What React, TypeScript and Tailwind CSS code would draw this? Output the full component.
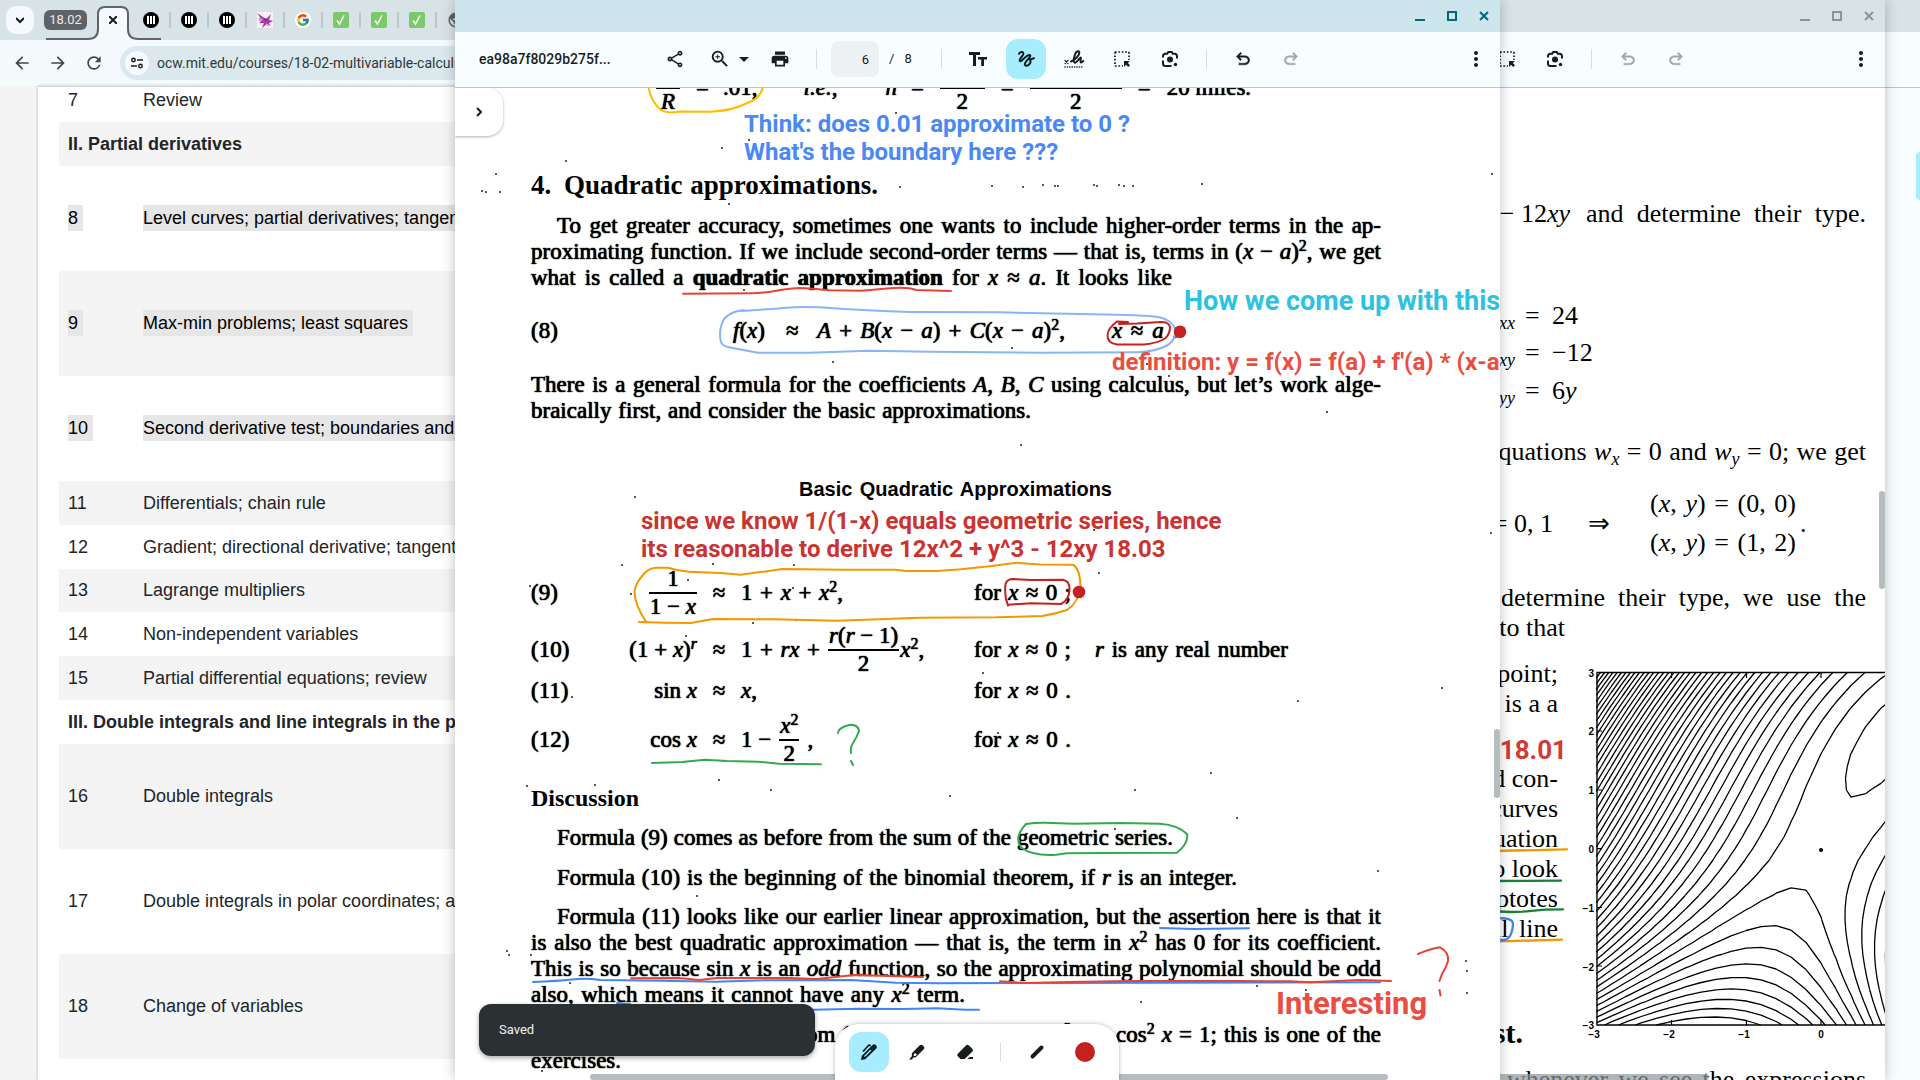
import React from "react";
import type { ReactNode } from "react";
import { FcGoogle } from "react-icons/fc";
import {
  MdArrowBack,
  MdArrowForward,
  MdRefresh,
  MdOutlineShare,
  MdZoomIn,
  MdArrowDropDown,
  MdPrint,
  MdMoreVert,
  MdPublic,
} from "react-icons/md";

/* ---------- icons ---------- */

const UNDO =
  "M7 19v-2h7.1q1.575 0 2.738-1T18 13.5 16.838 11 14.1 10H7.8l2.6 2.6L9 14 4 9l5-5 1.4 1.4L7.8 8h6.3q2.425 0 4.163 1.575T20 13.5t-1.737 3.925T14.1 19z";

function UndoIcon({ flip = false }: { flip?: boolean }) {
  return (
    <svg viewBox="0 0 24 24" className={flip ? "size-5 -scale-x-100" : "size-5"} fill="currentColor">
      <path d={UNDO} stroke="currentColor" strokeWidth="0.5" />
    </svg>
  );
}

function TextSizeIcon() {
  return (
    <svg viewBox="0 0 20 20" className="size-5" fill="currentColor">
      <path d="M1 3h11v3H8v11H5V6H1zM10 8h9v2.600h-3V17h-2.800v-6.400H10z" />
    </svg>
  );
}

function DrawIcon() {
  return (
    <svg viewBox="0 0 20 20" className="size-5" fill="none" stroke="currentColor" strokeWidth="2" strokeLinecap="round">
      <path d="M3 4.800C4.500 2.500 7.800 2.400 7.300 5 6.700 7.600 2.800 10 3.800 12c1.200 2 6-6.300 9.700-6 3.300.5-3.500 5.500-4.600 8.500-.7 2.500 2.300 3.200 4.600.5 1.800-2.100 1.300-5-1.100-4.800M13.500 10c2 .4 3 .2 4.500-.8" />
    </svg>
  );
}

function SignIcon() {
  return (
    <svg viewBox="0 0 22 20" className="h-5 w-[22px]" fill="none" stroke="currentColor" strokeLinecap="round">
      <path d="M2 11.500l3 3M5 11.500l-3 3" strokeWidth="1.200" />
      <path
        d="M8 12.500c4-1.500 8.500-6 8.300-9C16 1.300 13.500 2 12.300 4.800 11 8 9.800 12.500 11.600 13.600c2 1 4.300-4.200 6-5 .9-.3-.9 4.600.3 4.900.7.2 1.500-.7 2.300-1.500"
        strokeWidth="2"
      />
      <path d="M2 18h18" strokeWidth="1.600" strokeDasharray="0.1 2.3" />
    </svg>
  );
}

function SelectAreaIcon() {
  return (
    <svg viewBox="0 0 20 20" className="size-5" fill="currentColor">
      <path
        d="M3 3h14M3 3v14M17 3v8M3 17h8"
        fill="none"
        stroke="currentColor"
        strokeWidth="1.700"
        strokeDasharray="1.700 1.700"
      />
      <path d="M12 12h6l-2.200 2L18 16.300 16.300 18 14 15.800 12 18z" />
    </svg>
  );
}

function LensIcon() {
  return (
    <svg viewBox="0 0 20 20" className="size-5" fill="none" stroke="currentColor" strokeWidth="2">
      <path d="M3 8.500V7a2.200 2.200 0 0 1 2.200-2.200h2L8.300 3h3.400l1.100 1.800h2A2.200 2.200 0 0 1 17 7v2.500M3 11.500v3A2.500 2.500 0 0 0 5.500 17h6" />
      <circle cx="10" cy="10.500" r="3" fill="currentColor" stroke="none" />
      <circle cx="15.500" cy="15.500" r="1.700" fill="currentColor" stroke="none" />
    </svg>
  );
}

function PenIcon() {
  return (
    <svg viewBox="0 0 20 20" className="size-5" fill="currentColor">
      <path d="M2 18l.800-4.200L13.500 3.100c1-1 2.300-1 3.200-.1l.5.5c.9.9.9 2.200-.1 3.200L6.200 17.300z" />
      <path d="M4 9.500l5-5.500c.8-.9 1.800-.9 2.600-.2" fill="none" stroke="currentColor" strokeWidth="1.700" />
      <path d="M5.500 14.500L12 8" stroke="#a8edff" strokeWidth="1.200" />
    </svg>
  );
}

function MarkerIcon() {
  return (
    <svg viewBox="0 0 20 20" className="size-5" fill="currentColor">
      <path
        fillRule="evenodd"
        d="M2 17.500l3-3.500-.3-1.700c0-.7.200-1.200.6-1.600l7.200-7.200c1.100-1.100 2.300-1.100 3.300-.100l.8.800c1 1 1 2.300-.1 3.300L9.300 14.800c-.5.4-1 .6-1.600.6l-1.200-.1L5 17.500zM6.800 12.200l-.2 1.200.7.7 1.300-.2 1.200-1.300-1.700-1.700z"
      />
    </svg>
  );
}

function EraserIcon() {
  return (
    <svg viewBox="0 0 20 20" className="size-5" fill="currentColor">
      <path d="M8 17H5.500l-2.700-2.700c-.8-.8-.8-1.800 0-2.600l8.400-8.400c.8-.8 1.800-.8 2.600 0l3.600 3.600c.8.800.8 1.800 0 2.600L9.700 17zM12.500 17l2-2H18v2z" />
    </svg>
  );
}

/* ---------- small pieces ---------- */

function IconButton({ label, className = "", children }: { label: string; className?: string; children: ReactNode }) {
  return (
    <button
      type="button"
      aria-label={label}
      className={`flex h-10 w-10 shrink-0 items-center justify-center rounded-xl ${className}`}
    >
      {children}
    </button>
  );
}

function WindowControls({ active }: { active: boolean }) {
  return (
    <div className={`flex items-center gap-3 ${active ? "text-[#006978]" : "text-[#8a9496]"}`}>
      <button type="button" aria-label="Minimize" className="flex h-5 w-5 items-center justify-center">
        <svg viewBox="0 0 10 10" className="size-[10px]">
          <path d="M0 9h10" stroke="currentColor" strokeWidth="2" />
        </svg>
      </button>
      <button type="button" aria-label="Maximize" className="flex h-5 w-5 items-center justify-center">
        <svg viewBox="0 0 10 10" className="size-[10px]">
          <rect x="1" y="1" width="8" height="8" fill="none" stroke="currentColor" strokeWidth="2" />
        </svg>
      </button>
      <button type="button" aria-label="Close" className="flex h-5 w-5 items-center justify-center">
        <svg viewBox="0 0 10 10" className="size-[10px]">
          <path d="M1 1l8 8M9 1L1 9" stroke="currentColor" strokeWidth="2" />
        </svg>
      </button>
    </div>
  );
}

function Divider({ className = "" }: { className?: string }) {
  return <span className={`h-5 w-px shrink-0 bg-[#d5dde0] ${className}`} />;
}

function ViewerWindow({
  active,
  title,
  className,
  children,
}: {
  active: boolean;
  title: string;
  className: string;
  children: ReactNode;
}) {
  return (
    <section
      className={`absolute inset-y-0 flex w-[1045px] flex-col overflow-hidden bg-white shadow-[0_0_12px_rgba(0,0,0,0.25)] ${className}`}
    >
      <div
        className={`flex h-8 shrink-0 items-center justify-end pr-[6px] ${active ? "bg-[#cde6ed]" : "bg-[#d7e3e7]"}`}
      >
        <WindowControls active={active} />
      </div>
      <header className="flex h-14 shrink-0 items-center border-b border-[#bcc6c9] bg-[#f8fdff] pr-1 pb-px pl-6 text-[#171d1e]">
        <h1 className="w-[176px] truncate font-['Roboto',sans-serif] text-[14px] font-medium">{title}</h1>
        <IconButton label="Share">
          <MdOutlineShare className="size-5" />
        </IconButton>
        <IconButton label="Zoom" className="ml-[5px]">
          <MdZoomIn className="size-[22px]" />
        </IconButton>
        <button type="button" aria-label="Zoom levels" className="-ml-2 flex h-10 w-6 items-center justify-center">
          <MdArrowDropDown className="size-6 shrink-0" />
        </button>
        <IconButton label="Print" className="ml-1">
          <MdPrint className="size-5" />
        </IconButton>
        <Divider className="ml-4" />
        <input
          aria-label="Page number"
          defaultValue="6"
          className="ml-[14px] h-9 w-12 rounded-lg bg-[#edf1f3] pr-[10px] text-right font-['Roboto',sans-serif] text-[13px]"
        />
        <span className="ml-[10px] flex w-[38px] gap-[10px] font-['Roboto',sans-serif] text-[13px]">
          <span>/</span>
          <span>8</span>
        </span>
        <Divider className="ml-[14px]" />
        <IconButton label="Add text" className="ml-4">
          <TextSizeIcon />
        </IconButton>
        <IconButton label="Draw" className={`ml-2 ${active ? "bg-[#a8edff] text-[#001f25]" : ""}`}>
          <DrawIcon />
        </IconButton>
        <IconButton label="Sign" className="ml-2">
          <SignIcon />
        </IconButton>
        <IconButton label="Select area" className="ml-2">
          <SelectAreaIcon />
        </IconButton>
        <IconButton label="Search with lens" className="ml-2">
          <LensIcon />
        </IconButton>
        <Divider className="ml-4" />
        <IconButton label="Undo" className={active ? "ml-4" : "ml-4 text-[#a2a7a8]"}>
          <UndoIcon />
        </IconButton>
        <IconButton label="Redo" className="ml-2 text-[#a2a7a8]">
          <UndoIcon flip />
        </IconButton>
        <IconButton label="More" className="ml-auto">
          <MdMoreVert className="size-6" />
        </IconButton>
      </header>
      <div className="relative flex-1 overflow-hidden bg-white">{children}</div>
    </section>
  );
}

function Line({ className = "", children }: { className?: string; children: ReactNode }) {
  return <div className={`text-justify whitespace-nowrap [text-align-last:justify] ${className}`}>{children}</div>;
}

function Sup({ children }: { children: ReactNode }) {
  return <sup className="text-[16px] leading-none">{children}</sup>;
}

function Frac({ top, bottom }: { top: ReactNode; bottom: ReactNode }) {
  return (
    <span className="inline-flex flex-col items-center align-middle">
      <span className="px-px">{top}</span>
      <span className="h-[2px] w-full bg-black" />
      <span className="px-px">{bottom}</span>
    </span>
  );
}

/* ---------- browser window with course calendar ---------- */

function MediumFavicon() {
  return (
    <svg viewBox="0 0 16 16" className="size-4">
      <circle cx="8" cy="8" r="8" fill="#000" />
      <rect x="4" y="4" width="2" height="8" fill="#fff" />
      <rect x="7" y="4" width="2" height="8" fill="#fff" />
      <rect x="10" y="4" width="2" height="8" fill="#fff" />
    </svg>
  );
}

function BirdFavicon() {
  return (
    <svg viewBox="0 0 16 16" className="size-4">
      <rect width="16" height="16" fill="#fbeff9" />
      <path d="M0 1l6 4 3 2 5-5-2 6 4 1-4 2 2 3-4-2-5 4 2-5-5 0 3-3z" fill="#a53ba4" />
      <path d="M2 5l5 3-5 1zM9 10l3 5-2-1z" fill="#e17fc8" />
      <path d="M7 6l3 1-2 2z" fill="#5f2a7d" />
    </svg>
  );
}

function CheckFavicon() {
  return (
    <svg viewBox="0 0 16 16" className="size-4">
      <rect width="16" height="16" rx="2" fill="#7cc96c" />
      <path d="M4 8.500l2.500 3.500L11 3.500" fill="none" stroke="#fff" strokeWidth="1.500" />
    </svg>
  );
}

function GoogleFavicon() {
  return (
    <span className="flex size-4 items-center justify-center rounded-full bg-white">
      <FcGoogle className="size-[14px]" />
    </span>
  );
}

const TABS: { name: string; icon: ReactNode }[] = [
  { name: "Article 1", icon: <MediumFavicon /> },
  { name: "Article 2", icon: <MediumFavicon /> },
  { name: "Article 3", icon: <MediumFavicon /> },
  { name: "Bird", icon: <BirdFavicon /> },
  { name: "Search", icon: <GoogleFavicon /> },
  { name: "Task 1", icon: <CheckFavicon /> },
  { name: "Task 2", icon: <CheckFavicon /> },
  { name: "Task 3", icon: <CheckFavicon /> },
  { name: "Site", icon: <MdPublic className="size-[18px] text-[#5f6368]" /> },
];

type Row = { n?: string; text: string; size?: "tall" | "short"; marked?: boolean; head?: boolean; shade?: boolean };

const ROWS: Row[] = [
  { n: "7", text: "Review" },
  { text: "II. Partial derivatives", head: true, shade: true },
  { n: "8", text: "Level curves; partial derivatives; tangent plane approximation", size: "tall", marked: true },
  { n: "9", text: "Max-min problems; least squares", size: "tall", marked: true, shade: true },
  { n: "10", text: "Second derivative test; boundaries and infinity", size: "tall", marked: true },
  { n: "11", text: "Differentials; chain rule", shade: true },
  { n: "12", text: "Gradient; directional derivative; tangent plane" },
  { n: "13", text: "Lagrange multipliers", size: "short", shade: true },
  { n: "14", text: "Non-independent variables" },
  { n: "15", text: "Partial differential equations; review", shade: true },
  { text: "III. Double integrals and line integrals in the plane", head: true },
  { n: "16", text: "Double integrals", size: "tall", shade: true },
  { n: "17", text: "Double integrals in polar coordinates; applications", size: "tall" },
  { n: "18", text: "Change of variables", size: "tall", shade: true },
];

const ROW_HEIGHT = { tall: "h-[105px]", short: "h-[43px]", normal: "h-11" };

function Browser() {
  return (
    <section className="absolute inset-0 flex flex-col overflow-hidden bg-[#f4f4f4]">
      <div className="relative flex h-10 shrink-0 items-center bg-[#d7e3e7] pl-[6px] font-['Roboto',sans-serif]">
        <button type="button" aria-label="Search tabs" className="flex h-7 w-7 items-center justify-center rounded-[10px] bg-[#f5fbfd]">
          <svg viewBox="0 0 8 8" className="size-2" fill="none" stroke="#171d1e" strokeWidth="2">
            <path d="M0 2l4 4 4-4" />
          </svg>
        </button>
        <button type="button" className="ml-[10px] h-5 w-[43px] rounded-md bg-[#5f6368] text-[13px] leading-5 text-[#e8eaed]">
          18.02
        </button>
        <svg viewBox="46 6 116 34" className="absolute bottom-0 left-[46px] h-[34px] w-[116px]">
          <path
            d="M46 39h42q9 0 9-9V14q0-7 7-7h18q7 0 7 7v16q0 9 9 9h23v2H46z"
            fill="#f5fbfd"
          />
          <path
            d="M46 39h42q10 0 10-10V14q0-7 7-7h16q7 0 7 7v15q0 10 10 10h23"
            fill="none"
            stroke="#5f6368"
            strokeWidth="2"
          />
        </svg>
        <button type="button" aria-label="Close tab" className="relative ml-[17px] flex h-6 w-[18px] items-center justify-center">
          <svg viewBox="0 0 8 8" className="size-2" stroke="#171d1e" strokeWidth="2">
            <path d="M0 0l8 8M8 0L0 8" />
          </svg>
        </button>
        <div className="ml-[11px] flex items-center">
          {TABS.map((t) => (
            <button
              type="button"
              key={t.name}
              aria-label={t.name}
              className="flex h-4 w-[38px] items-center border-r-2 border-[#bfc6c8] pl-[10px]"
            >
              {t.icon}
            </button>
          ))}
        </div>
      </div>
      <div className="flex h-[46px] shrink-0 items-center bg-[#f5fbfd] pl-[12px] text-[#3b484b]">
        <button type="button" aria-label="Back">
          <MdArrowBack className="size-5" />
        </button>
        <button type="button" aria-label="Forward" className="ml-4">
          <MdArrowForward className="size-5" />
        </button>
        <button type="button" aria-label="Reload" className="ml-4">
          <MdRefresh className="size-5" />
        </button>
        <div className="ml-4 flex h-[34px] flex-1 items-center rounded-full bg-[#dbe9ee] pl-[5px]">
          <span className="flex size-6 items-center justify-center rounded-full bg-[#f5fbfd]">
            <svg viewBox="0 0 12 12" className="size-3" fill="none" stroke="#171d1e" strokeWidth="1.500">
              <circle cx="2.500" cy="3" r="1.700" />
              <path d="M6 3h6M0 9h6" />
              <circle cx="9.500" cy="9" r="1.700" />
            </svg>
          </span>
          <input
            aria-label="Address"
            defaultValue="ocw.mit.edu/courses/18-02-multivariable-calculus-fall-2007"
            className="ml-2 w-[600px] bg-transparent font-['Roboto',sans-serif] text-[14px] text-[#30383a]"
          />
        </div>
      </div>
      <main className="ml-[38px] flex-1 overflow-hidden border-t border-[#c9dde3] bg-white pl-[21px] shadow-[0_0_3px_rgba(0,0,0,0.25)]">
        <table className="-mt-[9px] w-full border-collapse font-['Liberation_Sans',sans-serif] text-[18px] text-[#212529]">
          <tbody>
            {ROWS.map((r) => (
              <tr key={r.text} className={`${ROW_HEIGHT[r.size ?? "normal"]} ${r.shade ? "bg-[#f4f4f4]" : ""}`}>
                {r.head ? (
                  <th colSpan={2} scope="colgroup" className="p-0 pl-[9px] text-left font-bold">
                    {r.text}
                  </th>
                ) : (
                  <>
                    <td className="w-[84px] p-0 pl-[9px]">
                      <span className={r.marked ? "bg-[#e6e6e6] py-[3px] pr-[5px] text-black" : ""}>{r.n}</span>
                    </td>
                    <td className="p-0 whitespace-nowrap">
                      <span className={r.marked ? "bg-[#e6e6e6] py-[3px] pr-[5px] text-black" : ""}>{r.text}</span>
                    </td>
                  </>
                )}
              </tr>
            ))}
          </tbody>
        </table>
      </main>
    </section>
  );
}

/* ---------- right document ---------- */

const sx = (x: number) => 1821 + x * 74.9;
const sy = (y: number) => 848.7 - y * 58.75;

function contourPath(): string {
  const f = (x: number, y: number) => 12 * x * x + y * y * y - 12 * x * y;
  const step = 0.2;
  const out: string[] = [];
  for (let k = 1; k <= 50; k++) {
    const level = -54 + (297 / 51) * k;
    for (let i = 0; i < 20; i++) {
      for (let j = 0; j < 30; j++) {
        const x0 = -3 + i * step;
        const y0 = -3 + j * step;
        const c = [
          [x0, y0],
          [x0 + step, y0],
          [x0 + step, y0 + step],
          [x0, y0 + step],
        ];
        const v = c.map(([x, y]) => f(x, y) - level);
        const pts: string[] = [];
        for (let e = 0; e < 4; e++) {
          const a = v[e];
          const b = v[(e + 1) % 4];
          if (a < 0 !== b < 0) {
            const t = a / (a - b);
            const p = c[e];
            const q = c[(e + 1) % 4];
            pts.push(`${sx(p[0] + t * (q[0] - p[0])).toFixed(1)} ${sy(p[1] + t * (q[1] - p[1])).toFixed(1)}`);
          }
        }
        for (let m = 0; m + 1 < pts.length; m += 2) out.push(`M${pts[m]}L${pts[m + 1]}`);
      }
    }
  }
  return out.join("");
}

const CONTOURS = contourPath();

function ContourPlot() {
  return (
    <svg viewBox="1576 656 309 386" className="-mt-[3px] h-[386px] w-[309px] shrink-0">
      <path d={CONTOURS} fill="none" stroke="#000" strokeWidth="1.300" />
      <path d="M1900 672.500H1597V1025H1900" fill="none" stroke="#000" strokeWidth="1.400" />
      <path
        d="M1597 731h5M1597 790h5M1597 848.700h5M1597 907.500h5M1597 966h5M1671.500 1025v-5M1746.500 1025v-5M1821 1025v-5M1671.500 673v5M1746.500 673v5M1821 673v5"
        stroke="#000"
        strokeWidth="1.200"
      />
      <circle cx="1821" cy="850" r="2" />
      <g fontFamily="'Liberation Sans', sans-serif" fontSize="10" fontWeight="700" fill="#000">
        <g textAnchor="end">
          <text x="1594" y="677">3</text>
          <text x="1594" y="735">2</text>
          <text x="1594" y="794">1</text>
          <text x="1594" y="853">0</text>
          <text x="1594" y="912">−1</text>
          <text x="1594" y="971">−2</text>
          <text x="1594" y="1029">−3</text>
        </g>
        <g textAnchor="middle">
          <text x="1594" y="1038">−3</text>
          <text x="1669" y="1038">−2</text>
          <text x="1744" y="1038">−1</text>
          <text x="1821" y="1038">0</text>
        </g>
      </g>
    </svg>
  );
}

function RightDocument() {
  return (
    <>
      <article className="flex h-full flex-col items-end pr-[19px] font-['Liberation_Serif',serif] text-[26px] leading-[30px] whitespace-nowrap text-black">
        <div className="mt-[111px] flex items-baseline gap-4">
          <span>
            − 12<i>xy</i>
          </span>
          <Line className="w-[280px]">and determine their type.</Line>
        </div>
        {[
          ["xx", <>24</>, "mt-[72px]"],
          ["xy", <>−12</>, "mt-[7px]"],
          ["yy", <>6<i>y</i></>, "mt-2"],
        ].map(([s, v, m]) => (
          <div key={s as string} className={`flex w-[386px] items-baseline ${m}`}>
            <span className="w-[35px] text-right">
              <i>w</i>
              <sub className="text-[18px] leading-none italic">{s}</sub>
            </span>
            <span className="ml-[10px] w-[27px]">=</span>
            <span>{v}</span>
          </div>
        ))}
        <Line className="mt-[31px] w-[379px]">
          equations <i>w</i>
          <sub className="text-[18px] leading-none italic">x</sub> = 0 and <i>w</i>
          <sub className="text-[18px] leading-none italic">y</sub> = 0; we get
        </Line>
        <div className="mt-[22px] flex w-[386px] items-center">
          <span className="w-[73px] text-right">= 0, 1</span>
          <span className="ml-[35px] w-[62px]">⇒</span>
          <div className="flex w-[146px] flex-col gap-[9px]">
            <Line>
              (<i>x</i>, <i>y</i>) = (0, 0)
            </Line>
            <Line>
              (<i>x</i>, <i>y</i>) = (1, 2)
            </Line>
          </div>
          <span className="ml-1">.</span>
        </div>
        <Line className="mt-[25px] w-[365px]">determine their type, we use the</Line>
        <div className="w-[386px]">
          <div className="w-[85px] text-right">to that</div>
        </div>
        <div className="mt-4 -mr-[19px] flex items-start">
          <div className="flex w-[96px] flex-col items-end pr-[18px]">
            <div>point;</div>
            <div>is a a</div>
            <div className="-mr-[9px] h-[45px] pt-4 font-['Roboto',sans-serif] font-bold text-[#d03a37]">18.01</div>
            <div>and con-</div>
            <div>curves</div>
            <div>equation</div>
            <div>to look</div>
            <div>asymptotes</div>
            <div>
              all <span className="ml-1">line</span>
            </div>
            <div className="mt-[74px] mr-[35px] text-[30px] font-bold">test.</div>
          </div>
          <ContourPlot />
        </div>
        <Line className="mt-[17px] w-[359px]">whenever we see the expressions</Line>
      </article>
      <svg viewBox="840 88 1045 992" className="pointer-events-none absolute top-0 left-0 h-[992px] w-[1045px]" fill="none" strokeWidth="2.300" strokeLinecap="round">
        <path d="M1490 851L1515 850.500 1567 849.300M1490 941.700L1562 939.700" stroke="#f29900" />
        <path d="M1490 881L1561 880.700M1490 911L1510 912 1523 911.700 1545 909.600 1563 909.300" stroke="#188038" />
        <path d="M1495 918.500Q1513 917 1513 924 1512 939 1504 940L1495 940" stroke="#4285f4" />
      </svg>
      <div className="absolute top-[403px] right-0 h-[98px] w-[6px] rounded-full bg-[#b5bdbf]" />
      <div className="absolute bottom-0 left-[300px] h-[6px] w-[569px] rounded-full bg-[#8f999c]/70" />
    </>
  );
}

/* ---------- center document ---------- */

const INK: { color: string; d: string }[] = [
  { color: "#fbbc04", d: "M648 84Q650 101 661 110 668 114 679 111.500L710 111.700Q731 111 745 104 763 98 763 84" },
  { color: "#ea4335", d: "M683 293.700L751 293.300Q765 293 775 291T799 288Q805 288 813 288.700T830 290.300L861 290.700Q880 289 894 288T916 290L951 291" },
  {
    color: "#8ab4f8",
    d: "M744 310Q731 311 724 319 718 330 721 342 722 346 730 347.500L758 352.700 810 352.700 868 350.700 930 351.700 1040 352.700 1137 352.300Q1155 352 1168 345 1178 337 1175 328 1170 319 1158 317 1144 315 1093 314.300L1000 312.300 910 312Q870 311 820 307.300 795 306 775 308.700L741 311",
  },
  {
    color: "#c5221f",
    d: "M1119 324L1128 322 1117 321.500Q1108 328 1107.500 335 1107 343 1117 344.500L1144 344.500Q1158 343 1165 338.500 1170 334 1170 327 1169 322 1161 322L1137 323.500 1119 324",
  },
  {
    color: "#f29900",
    d: "M646 621.700Q635 605 634.500 592 635 583 645 572.700 650 568 656 567.700L668 567.700Q678 571 689 571.700L720 573 741 574.700Q762 572 782 569L844 569.700 896 569.700 906 571 937 571 961 569.300 992 566 1016 562.700 1040 564.500 1073 564.700Q1080 569 1080.500 586 1079 602 1067 610 1055 614 1042 616L996 617.300 920 617.700 837 620.700 775 619.300 713 619 691 623 665 622.700 639 622",
  },
  {
    color: "#c5221f",
    d: "M1008 605.700Q1004 596 1005.500 584 1007 579 1013 579L1031 580 1063 579.700Q1070 581 1069.500 590 1069 600 1061 604L1031 603.300 1008 604.700",
  },
  { color: "#34a853", d: "M652 763L682 762 705 759.700 727 761 758 761.700 779 763.700 821 764.300" },
  { color: "#34a853", d: "M838 733Q838 728 849 725 858 724 859 731 857 737 853 743 850 747 851 753M851 761L853 765" },
  {
    color: "#34a853",
    d: "M1026 824Q1035 822.500 1045 822.700L1074 823.700 1120 823 1160 823.700Q1178 825 1187 834 1189 843 1177 852.700L1103 853 1067 853.300 1056 854.700Q1032 856 1022 848 1013 838 1026 824z",
  },
  { color: "#4285f4", d: "M1160 928L1195 929 1249 928.300" },
  {
    color: "#4285f4",
    d: "M533 982Q558 981 572 979.500T600 980L661 980.700 716 981.700 765 980.300 851 980 896 982.700 937 983.300 1050 983 1380 982.300M617 1003L630 1004M790 1010L813 1009.700 858 1008.700 903 1009 937 1008.300 965 1009.700 979 1009.700",
  },
  {
    color: "#ea4335",
    d: "M631 978.300L679 978 699 980 717 978 789 978 817 979 854 975 890 976 923 977M1000 981.300L1025 983 1069 982 1128 981 1238 981 1290 981.300 1310 982.300 1359 980 1391 981",
  },
  { color: "#ea4335", d: "M1418 954Q1430 949 1440 947.300 1449 952 1448 961 1446 968 1442 974L1439.500 981M1439.500 990L1440.500 995.500" },
];

const SPECKS: [number, number][] = [
  [496, 174], [482, 191], [486, 192], [500, 192], [566, 161], [722, 148], [749, 140], [729, 204], [896, 113], [900, 187],
  [992, 186], [1023, 187], [1043, 185], [1055, 186], [1058, 186], [1094, 185], [1097, 186], [1119, 185], [1124, 186],
  [1133, 186], [1202, 184], [1492, 174], [744, 290], [833, 362], [1012, 348], [1147, 364], [1169, 376], [1021, 445],
  [1327, 412], [635, 497], [622, 565], [713, 564], [794, 565], [688, 580], [631, 594], [793, 588], [1099, 573],
  [753, 623], [796, 620], [686, 636], [530, 586], [983, 673], [572, 697], [1298, 701], [1442, 688], [998, 733],
  [1211, 773], [1135, 790], [1237, 818], [527, 786], [595, 785], [719, 780], [771, 790], [950, 796], [507, 951],
  [509, 955], [531, 955], [697, 896], [570, 983], [1378, 871], [1466, 961], [1467, 971], [1467, 993], [1257, 986],
  [1306, 990], [1418, 998], [1141, 1002], [542, 1071], [1030, 527], [1094, 530], [1491, 533], [1115, 829],
];

function EquationRow({
  n,
  className,
  lhs,
  rhs,
  cond,
}: {
  n: string;
  className: string;
  lhs: ReactNode;
  rhs: ReactNode;
  cond: ReactNode;
}) {
  return (
    <div className={`grid grid-cols-[60px_106px_44px_233px_1fr] items-center ${className}`}>
      <span>{n}</span>
      <span className="text-right">{lhs}</span>
      <span className="text-center">≈</span>
      <span className="flex items-center">{rhs}</span>
      <span className="flex">{cond}</span>
    </div>
  );
}

function Near({ end }: { end: string }) {
  return (
    <Line className="w-[97px]">
      for <i>x</i> ≈ 0 {end}
    </Line>
  );
}

function Note({ className, children }: { className: string; children: ReactNode }) {
  return (
    <div className={`absolute font-['Roboto',sans-serif] leading-7 font-bold whitespace-nowrap ${className}`}>
      {children}
    </div>
  );
}

function CenterDocument() {
  return (
    <>
      <article className="ml-[76px] w-[850px] font-['Liberation_Serif',serif] text-[23px] leading-[26px] whitespace-nowrap text-black [text-shadow:0_0_1px_#000,0_0_1px_#000]">
        <div className="-mt-7 flex h-14 items-center pl-[125px]">
          <Frac top={<i>h</i>} bottom={<span className="px-1"><i>R</i></span>} />
          <span className="ml-4">=</span>
          <span className="ml-[14px]">.01,</span>
          <i className="ml-[46px]">i.e.,</i>
          <i className="ml-12">h</i>
          <span className="ml-[14px]">=</span>
          <span className="ml-4">
            <Frac top={<i>.01R</i>} bottom="2" />
          </span>
          <span className="ml-4">=</span>
          <span className="ml-4">
            <Frac top=".01(4000)" bottom="2" />
          </span>
          <span className="ml-4">=</span>
          <span className="ml-4">20 miles.</span>
        </div>
        <h2 className="mt-[54px] flex text-[27px] leading-[30px] font-bold [text-shadow:none]">
          <span className="w-[33px]">4.</span>
          <Line className="w-[314px]">Quadratic approximations.</Line>
        </h2>
        <Line className="mt-[13px] pl-[26px]">
          To get greater accuracy, sometimes one wants to include higher-order terms in the ap-
        </Line>
        <Line>
          proximating function. If we include second-order terms — that is, terms in (<i>x</i> − <i>a</i>)<Sup>2</Sup>, we get
        </Line>
        <Line className="w-[641px]">
          what is called a <b>quadratic approximation</b> for <i>x</i> ≈ <i>a</i>. It looks like
        </Line>
        <div className="mt-[27px] flex">
          <span className="w-[202px]">(8)</span>
          <i className="w-[53px]">
            f<span className="not-italic">(</span>x<span className="not-italic">)</span>
          </i>
          <span className="w-[31px]">≈</span>
          <Line className="w-[248px]">
            <i>A</i> + <i>B</i>(<i>x</i> − <i>a</i>) + <i>C</i>(<i>x</i> − <i>a</i>)<Sup>2</Sup>,
          </Line>
          <Line className="ml-[47px] w-[66px]">
            <i>x</i> ≈ <i>a</i> .
          </Line>
        </div>
        <Line className="mt-7">
          There is a general formula for the coefficients <i>A</i>, <i>B</i>, <i>C</i> using calculus, but let’s work alge-
        </Line>
        <Line className="w-[500px]">braically first, and consider the basic approximations.</Line>
        <h3 className="mt-[52px] ml-[268px] font-['Liberation_Sans',sans-serif] text-[20px] font-bold [text-shadow:none]">
          <Line className="w-[313px]">Basic Quadratic Approximations</Line>
        </h3>
        <EquationRow
          n="(9)"
          className="mt-[63px] h-14"
          lhs={<Frac top="1" bottom={<>1 − <i>x</i></>} />}
          rhs={<Line className="w-[102px]">1 + <i>x</i> + <i>x</i><Sup>2</Sup>,</Line>}
          cond={<Near end=";" />}
        />
        <EquationRow
          n="(10)"
          className="h-[57px]"
          lhs={<>(1 + <i>x</i>)<sup className="text-[16px] leading-none italic">r</sup></>}
          rhs={
            <>
              <Line className="mr-2 w-[79px]">1 + <i>rx</i> +</Line>
              <Frac top={<><i>r</i>(<i>r</i> − 1)</>} bottom="2" />
              <span className="ml-px"><i>x</i><Sup>2</Sup>,</span>
            </>
          }
          cond={
            <>
              <Near end=";" />
              <Line className="ml-6 w-[193px]"><i>r</i> is any real number</Line>
            </>
          }
        />
        <EquationRow n="(11)" className="h-5" lhs={<>sin <i>x</i></>} rhs={<><i>x</i>,</>} cond={<Near end="." />} />
        <EquationRow
          n="(12)"
          className="h-[83px]"
          lhs={<>cos <i>x</i></>}
          rhs={
            <>
              <span className="mr-2">1 −</span>
              <Frac top={<><i>x</i><Sup>2</Sup></>} bottom="2" />
              <span className="ml-2">,</span>
            </>
          }
          cond={<Near end="." />}
        />
        <h3 className="mt-1 text-[24px] font-bold [text-shadow:none]">Discussion</h3>
        <Line className="mt-[14px] w-[642px] pl-[26px]">Formula (9) comes as before from the sum of the geometric series.</Line>
        <Line className="mt-[14px] w-[706px] pl-[26px]">
          Formula (10) is the beginning of the binomial theorem, if <i>r</i> is an integer.
        </Line>
        <Line className="mt-[13px] pl-[26px]">
          Formula (11) looks like our earlier linear approximation, but the assertion here is that it
        </Line>
        <Line>
          is also the best quadratic approximation — that is, the term in <i>x</i><Sup>2</Sup> has 0 for its coefficient.
        </Line>
        <Line>
          This is so because sin <i>x</i> is an <i>odd</i> function, so the approximating polynomial should be odd
        </Line>
        <Line className="w-[434px]">
          also, which means it cannot have any <i>x</i><Sup>2</Sup> term.
        </Line>
        <div className="mt-[14px] flex">
          <Line className="w-[336px] pl-[26px]">Formula (12) is obtained from (11)</Line>
          <Line className="ml-auto w-[344px]">
            sin<Sup>2</Sup> <i>x</i> + cos<Sup>2</Sup> <i>x</i> = 1; this is one of the
          </Line>
        </div>
        <div>exercises.</div>
      </article>

      <svg
        viewBox="455 88 1045 992"
        className="pointer-events-none absolute top-0 left-0 h-[992px] w-[1045px]"
        fill="none"
        strokeWidth="2"
        strokeLinecap="round"
        strokeLinejoin="round"
      >
        {SPECKS.map(([x, y]) => (
          <circle key={`${x}-${y}`} cx={x} cy={y} r="1" fill="#222" />
        ))}
        {INK.map((s) => (
          <path key={s.d} d={s.d} stroke={s.color} />
        ))}
        <circle cx="1180" cy="331.700" r="6.300" fill="#c5221f" />
        <circle cx="1079" cy="592" r="6.300" fill="#c5221f" />
      </svg>

      <Note className="top-[22px] left-[289px] text-[24px] text-[#4a88f5]">
        Think: does 0.01 approximate to 0 ?<br />
        What's the boundary here ???
      </Note>
      <Note className="top-[199px] left-[729px] text-[27px] text-[#2bc3e1]">How we come up with this</Note>
      <Note className="top-[260px] left-[657px] text-[24px] text-[#eb4e41]">definition: y = f(x) = f(a) + f'(a) * (x-a)</Note>
      <Note className="top-[419px] left-[186px] text-[24px] text-[#cb3330]">
        since we know 1/(1-x) equals geometric series, hence
        <br />
        its reasonable to derive 12x^2 + y^3 - 12xy 18.03
      </Note>
      <Note className="top-[902px] left-[821px] text-[31px] text-[#eb4e41]">Interesting</Note>

      <button
        type="button"
        aria-label="Open sidebar"
        className="absolute top-0 left-0 flex h-12 w-12 items-center justify-center rounded-r-2xl bg-white shadow-[0_1px_3px_rgba(0,0,0,0.3)]"
      >
        <svg viewBox="0 0 6 10" className="h-[10px] w-[6px]" fill="none" stroke="#171d1e" strokeWidth="2">
          <path d="M1 1l4 4-4 4" />
        </svg>
      </button>

      <div className="absolute top-[641px] right-0 h-[69px] w-[6px] rounded-full bg-[#b5bdbf]" />
      <div className="absolute bottom-0 left-[135px] h-[6px] w-[798px] rounded-full bg-[#b5bdbf]" />

      <div
        role="status"
        className="absolute bottom-6 left-6 flex h-[52px] w-[336px] items-center rounded-xl bg-[#2b3133] px-5 font-['Roboto',sans-serif] text-[13px] text-[#ecf2f4] shadow-[0_2px_5px_rgba(0,0,0,0.35)]"
      >
        Saved
      </div>

      <div
        role="toolbar"
        aria-label="Drawing tools"
        className="absolute bottom-0 left-[380px] flex h-14 items-center gap-2 rounded-t-3xl bg-white px-[14px] text-[#171d1e] shadow-[0_0_4px_rgba(0,0,0,0.3)]"
      >
        <IconButton label="Pen" className="bg-[#a8edff] text-[#001f25]">
          <PenIcon />
        </IconButton>
        <IconButton label="Highlighter">
          <MarkerIcon />
        </IconButton>
        <IconButton label="Eraser">
          <EraserIcon />
        </IconButton>
        <Divider className="mr-2 ml-[7px]" />
        <IconButton label="Stroke width">
          <svg viewBox="0 0 20 20" className="size-5" stroke="currentColor" strokeWidth="4" strokeLinecap="round">
            <path d="M5.500 14.500l9-9" />
          </svg>
        </IconButton>
        <IconButton label="Colour">
          <span className="size-5 rounded-full bg-[#c5221f]" />
        </IconButton>
      </div>
    </>
  );
}

export default function App() {
  return (
    <div className="relative h-screen w-full overflow-hidden bg-[#f4f4f4]">
      <Browser />
      <section className="absolute inset-y-0 right-0 left-[900px] flex flex-col bg-[#f8fdff]">
        <div className="h-8 shrink-0 bg-[#d7e3e7]" />
        <div className="h-14 shrink-0 border-b border-[#bcc6c9]" />
        <div className="mt-16 flex justify-end">
          <button type="button" aria-label="Panel" className="h-12 w-1 rounded-l-xl bg-[#a8edff]" />
        </div>
      </section>
      <ViewerWindow active={false} title="lecture-notes-10.pdf" className="left-[840px]">
        <RightDocument />
      </ViewerWindow>
      <ViewerWindow active title="ea98a7f8029b275f..." className="left-[455px]">
        <CenterDocument />
      </ViewerWindow>
    </div>
  );
}
